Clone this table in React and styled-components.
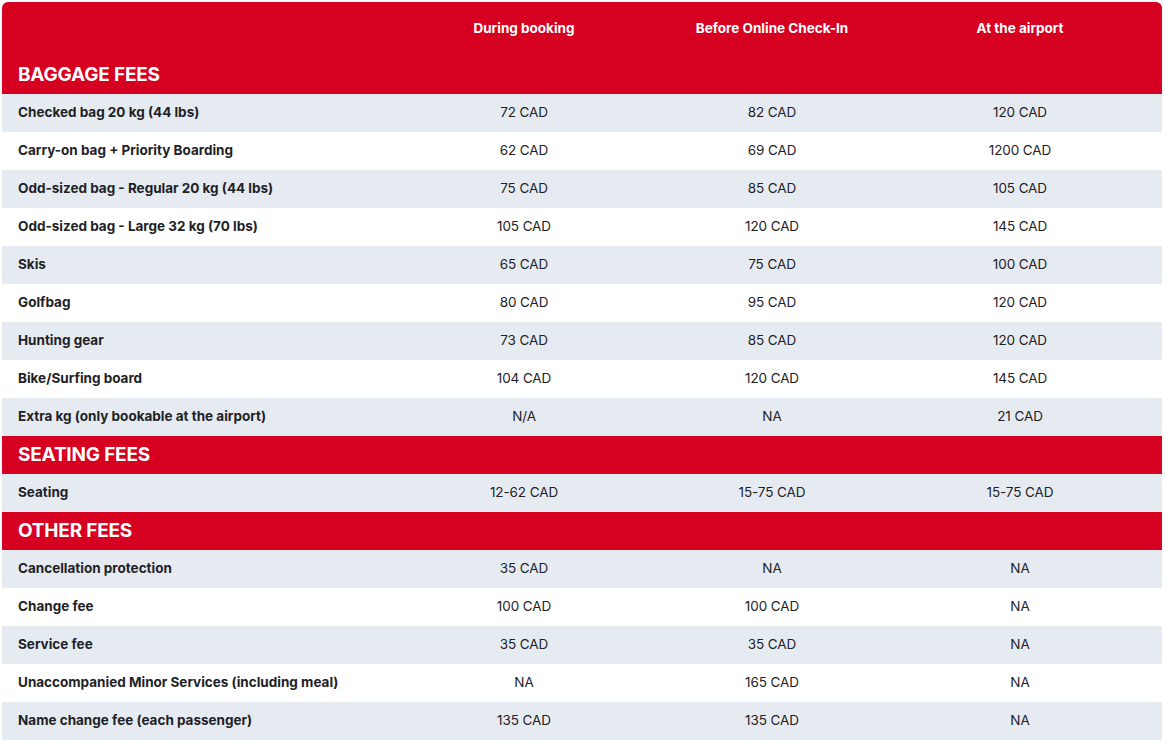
import styled, { createGlobalStyle } from 'styled-components'

const GlobalStyle = createGlobalStyle`
  body {
    margin: 0;
    padding: 2px;
    background: #ffffff;
    font-family: Inter, "Liberation Sans", sans-serif;
    color: #1e2227;
  }
`

const Table = styled.div`
  width: 1160px;
  border-radius: 6px 6px 0 0;
  overflow: hidden;
`

const Row = styled.div`
  display: grid;
  grid-template-columns: 398px repeat(3, 248px) 18px;
  align-items: center;
  height: 38px;
  padding-bottom: 2px;
  box-sizing: border-box;
  background: ${props => (props.shaded ? '#e6ebf2' : '#ffffff')};
`

const HeadRow = styled(Row)`
  background: #d60020;
  height: 54px;
  padding-bottom: 2px;
`

const ColTitle = styled.div`
  color: #ffffff;
  font-size: 13.5px;
  font-weight: 700;
  text-align: center;
`

const Section = styled.div`
  display: flex;
  align-items: center;
  height: 38px;
  padding: 0 0 1px 16px;
  box-sizing: border-box;
  background: #d60020;
  color: #ffffff;
  font-size: 19px;
  font-weight: 700;
  letter-spacing: -0.2px;
`

const Label = styled.div`
  padding-left: 16px;
  font-size: 13.5px;
  font-weight: 700;
`

const Price = styled.div`
  text-align: center;
  font-size: 13.5px;
  font-weight: 400;
  letter-spacing: -0.1px;
`

const sections = [
  {
    title: 'BAGGAGE FEES',
    rows: [
      ['Checked bag 20 kg (44 lbs)', '72 CAD', '82 CAD', '120 CAD'],
      ['Carry-on bag + Priority Boarding', '62 CAD', '69 CAD', '1200 CAD'],
      ['Odd-sized bag - Regular 20 kg (44 lbs)', '75 CAD', '85 CAD', '105 CAD'],
      ['Odd-sized bag - Large 32 kg (70 lbs)', '105 CAD', '120 CAD', '145 CAD'],
      ['Skis', '65 CAD', '75 CAD', '100 CAD'],
      ['Golfbag', '80 CAD', '95 CAD', '120 CAD'],
      ['Hunting gear', '73 CAD', '85 CAD', '120 CAD'],
      ['Bike/Surfing board', '104 CAD', '120 CAD', '145 CAD'],
      ['Extra kg (only bookable at the airport)', 'N/A', 'NA', '21 CAD'],
    ],
  },
  {
    title: 'SEATING FEES',
    rows: [['Seating', '12-62 CAD', '15-75 CAD', '15-75 CAD']],
  },
  {
    title: 'OTHER FEES',
    rows: [
      ['Cancellation protection', '35 CAD', 'NA', 'NA'],
      ['Change fee', '100 CAD', '100 CAD', 'NA'],
      ['Service fee', '35 CAD', '35 CAD', 'NA'],
      ['Unaccompanied Minor Services (including meal)', 'NA', '165 CAD', 'NA'],
      ['Name change fee (each passenger)', '135 CAD', '135 CAD', 'NA'],
    ],
  },
]

const App = () => (
  <>
    <GlobalStyle />
    <Table>
      <HeadRow>
        <div />
        <ColTitle>During booking</ColTitle>
        <ColTitle>Before Online Check-In</ColTitle>
        <ColTitle>At the airport</ColTitle>
      </HeadRow>
      {sections.map(section => (
        <div key={section.title}>
          <Section>{section.title}</Section>
          {section.rows.map(([label, ...prices], i) => (
            <Row key={label} shaded={i % 2 === 0}>
              <Label>{label}</Label>
              {prices.map((p, j) => (
                <Price key={j}>{p}</Price>
              ))}
            </Row>
          ))}
        </div>
      ))}
    </Table>
  </>
)

export default App
